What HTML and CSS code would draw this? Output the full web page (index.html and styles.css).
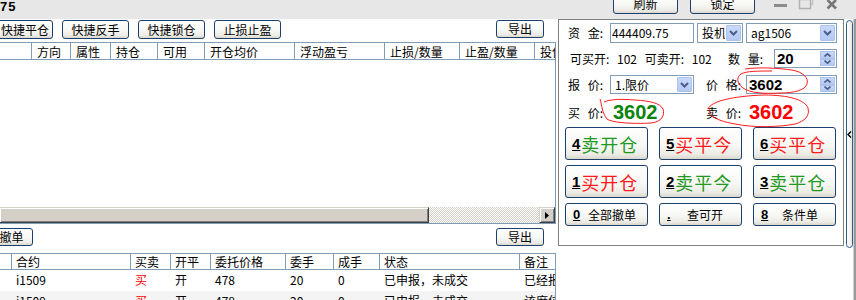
FILE: index.html
```html
<!DOCTYPE html>
<html lang="zh-CN">
<head>
<meta charset="utf-8">
<title>交易下单</title>
<link rel="stylesheet" href="styles.css">
</head>
<body>
<div class="app">
  <header class="topbar">
    <span class="title">75</span>
    <div class="topbtns">
      <span class="btn tbtn">刷新</span>
      <span class="btn tbtn">锁定</span>
    </div>
    <svg class="winctl" width="64" height="14" viewBox="0 0 64 14">
      <rect x="0" y="4" width="13" height="3" fill="#8c8c8c"/>
      <rect x="28.5" y="-3.5" width="10" height="8" fill="none" stroke="#c4c4c4" stroke-width="1.5"/>
      <rect x="25.5" y="-0.5" width="11" height="9" fill="#e7e7e7" stroke="#b0b0b0" stroke-width="1.5"/>
      <path d="M53.5 0 L62 8.5 M62 0 L53.5 8.5" stroke="#767676" stroke-width="2.6"/>
    </svg>
  </header>

  <div class="main">
    <section class="left">
      <div class="toolbar tb1">
        <span class="btn qb first">快捷平仓</span>
        <span class="btn qb">快捷反手</span>
        <span class="btn qb">快捷锁仓</span>
        <span class="btn qb">止损止盈</span>
        <span class="btn exp">导出</span>
      </div>

      <div class="grid g1">
        <div class="ghead cols1">
          <span></span><span>方向</span><span>属性</span><span>持仓</span><span>可用</span><span>开仓均价</span><span>浮动盈亏</span><span>止损/数量</span><span>止盈/数量</span><span>投保</span>
        </div>
        <div class="gbody"></div>
        <div class="hscroll">
          <span class="thumb"></span>
          <span class="track"></span>
          <span class="arrow"><svg width="4" height="7" viewBox="0 0 4 7"><path d="M0 0 L4 3.5 L0 7 Z" fill="#000"/></svg></span>
        </div>
      </div>

      <div class="toolbar tb2">
        <span class="btn qb cancel">全部撤单</span>
        <span class="btn exp">导出</span>
      </div>

      <div class="grid g2">
        <div class="ghead cols2">
          <span></span><span>合约</span><span>买卖</span><span>开平</span><span>委托价格</span><span>委手</span><span>成手</span><span>状态</span><span>备注</span>
        </div>
        <div class="grow cols2">
          <span></span><span>i1509</span><span class="red">买</span><span>开</span><span>478</span><span>20</span><span>0</span><span>已申报，未成交</span><span>已经报入</span>
        </div>
        <div class="grow alt cols2">
          <span></span><span>i1509</span><span class="red">买</span><span>开</span><span>478</span><span>20</span><span>0</span><span>已申报，未成交</span><span>该席位</span>
        </div>
      </div>
    </section>

    <section class="right">
      <div class="frame">
        <div class="frow r1">
          <span class="lbl">资 金:</span>
          <span class="inp w84">444409.75</span>
          <span class="combo w46 ml3"><span class="cv">投机</span><span class="dd"><svg width="9" height="6" viewBox="0 0 9 6"><path d="M1 1 L4.5 4.5 L8 1" fill="none" stroke="#4a5f88" stroke-width="2"/></svg></span></span>
          <span class="combo w91 ml3"><span class="cv">ag1506</span><span class="dd"><svg width="9" height="6" viewBox="0 0 9 6"><path d="M1 1 L4.5 4.5 L8 1" fill="none" stroke="#4a5f88" stroke-width="2"/></svg></span></span>
        </div>
        <div class="frow r2">
          <span class="avail">可买开: 102 可卖开: 102</span>
          <span class="lbl lq">数 量:</span>
          <span class="spin w63"><span class="sv">20</span><span class="sb"><span class="sh"><svg width="7" height="4" viewBox="0 0 7 4"><path d="M0.5 3.5 L3.5 0.8 L6.5 3.5" fill="none" stroke="#4a5f88" stroke-width="1.6"/></svg></span><span class="sh"><svg width="7" height="4" viewBox="0 0 7 4"><path d="M0.5 0.5 L3.5 3.2 L6.5 0.5" fill="none" stroke="#4a5f88" stroke-width="1.6"/></svg></span></span></span>
        </div>
        <div class="frow r3">
          <span class="lbl">报 价:</span>
          <span class="combo w84"><span class="cv">1.限价</span><span class="dd"><svg width="9" height="6" viewBox="0 0 9 6"><path d="M1 1 L4.5 4.5 L8 1" fill="none" stroke="#4a5f88" stroke-width="2"/></svg></span></span>
          <span class="lbl lp">价 格:</span>
          <span class="spin w91"><span class="sv">3602</span><span class="sb"><span class="sh"><svg width="7" height="4" viewBox="0 0 7 4"><path d="M0.5 3.5 L3.5 0.8 L6.5 3.5" fill="none" stroke="#4a5f88" stroke-width="1.6"/></svg></span><span class="sh"><svg width="7" height="4" viewBox="0 0 7 4"><path d="M0.5 0.5 L3.5 3.2 L6.5 0.5" fill="none" stroke="#4a5f88" stroke-width="1.6"/></svg></span></span></span>
        </div>
        <div class="frow r4">
          <span class="lbl">买 价:</span>
          <span class="price buy">3602</span>
          <span class="lbl ls">卖 价:</span>
          <span class="price sell">3602</span>
        </div>
        <div class="opgrid">
          <button class="btn op"><u>4</u><span class="g">卖开仓</span></button>
          <button class="btn op"><u>5</u><span class="r">买平今</span></button>
          <button class="btn op"><u>6</u><span class="r">买平仓</span></button>
          <button class="btn op"><u>1</u><span class="r">买开仓</span></button>
          <button class="btn op"><u>2</u><span class="g">卖平今</span></button>
          <button class="btn op"><u>3</u><span class="g">卖平仓</span></button>
          <button class="btn op sm"><u class="k k0">0</u>全部撤单</button>
          <button class="btn op sm"><u class="k kd">.</u>查可开</button>
          <button class="btn op sm"><u class="k k8">8</u>条件单</button>
        </div>
      </div>
      <div class="vsplit"><svg width="5" height="7" viewBox="0 0 5 7"><path d="M4 0.5 L1 3.5 L4 6.5" fill="none" stroke="#000" stroke-width="1.4"/></svg></div>
      <div class="edge"></div>
    </section>
  </div>

  <svg class="marks" width="856" height="300" viewBox="0 0 856 300">
    <path d="M745 69 C760 67 778 68 792 70 C803 72 809 78 807 84 C805 90 795 93 780 93 C764 94 750 93 743 88 C737 84 736 77 741 74 C746 71 758 71 772 71" fill="none" stroke="#ff1a1a" stroke-width="1"/>
    <path d="M600 99 C602 105 602 113 607 119 C613 123 634 124 651 123 C662 122 665 115 663 109 C660 103 650 101 635 100 C622 99 611 99 604 102" fill="none" stroke="#ff1a1a" stroke-width="1"/>
    <path d="M708 109 C711 101 734 96 764 95 C789 95 805 100 808 108 C810 116 805 121 795 124 C780 127 755 128 735 124 C718 121 707 116 710 108" fill="none" stroke="#ff1a1a" stroke-width="1"/>
  </svg>
</div>
</body>
</html>
```

FILE: styles.css
```css
* { box-sizing: border-box; margin: 0; padding: 0; }

html, body {
  width: 856px;
  height: 300px;
  overflow: hidden;
  background: #fff;
}

body {
  font-family: "Noto Sans CJK SC", "Liberation Sans", sans-serif;
  font-size: 12px;
  line-height: 16px;
  color: #000;
}

.app {
  position: relative;
  width: 856px;
  height: 300px;
  overflow: hidden;
}

/* ---------- top bar ---------- */
.topbar {
  height: 19px;
  background: #e7e7e7;
  display: flex;
  align-items: flex-start;
}

.title {
  font-family: "Liberation Sans", sans-serif;
  font-weight: bold;
  font-size: 13px;
  line-height: 13px;
  letter-spacing: 1px;
}

.topbtns {
  display: flex;
  gap: 12px;
  margin-left: auto;
  margin-top: -6px;
}

.winctl {
  flex: none;
  margin-left: 19px;
  margin-right: 18px;
}

/* ---------- XP buttons ---------- */
.btn {
  display: flex;
  align-items: center;
  justify-content: center;
  flex: none;
  border: 1px solid #1d3f6e;
  border-radius: 3px;
  background: linear-gradient(180deg, #ffffff 0%, #f7f7f4 55%, #ecebe5 85%, #d9d6cc 100%);
  font-family: "Noto Sans CJK SC", "Liberation Sans", sans-serif;
  font-size: 12px;
  line-height: 16px;
  color: #000;
  white-space: nowrap;
  overflow: hidden;
}

.tbtn { width: 65px; height: 20px; }

/* ---------- left side ---------- */
.main {
  display: flex;
  height: 281px;
}

.left {
  width: 556px;
  flex: none;
  display: flex;
  flex-direction: column;
}

.toolbar {
  display: flex;
  align-items: flex-start;
  flex: none;
}

.tb1 { height: 23px; padding-top: 1px; gap: 9px; }
.tb2 { height: 29px; padding-top: 4px; }

.qb { width: 67px; height: 19px; }
.first { margin-left: -14px; justify-content: flex-end; padding-right: 3px; }
.tb2 .qb { height: 18px; }
.cancel { margin-left: -34px; }

.exp {
  width: 48px;
  height: 18px;
  margin-left: auto;
  margin-right: 12px;
}

.grid {
  border-top: 1px solid #7f9db9;
  border-right: 1px solid #7f9db9;
  display: flex;
  flex-direction: column;
  overflow: hidden;
}

.g1 {
  height: 182px;
  border-bottom: 1px solid #7f9db9;
  flex: none;
}

.g2 { flex: 1; }

.cols1 { display: grid; grid-template-columns: 31px 39px 40px 47px 47px 90px 90px 75px 75px 1fr; }
.cols2 { display: grid; grid-template-columns: 11px 119px 40px 40px 75px 48px 46px 140px 1fr; }

.ghead {
  border-bottom: 1px solid #7f9db9;
  flex: none;
}

.g1 .ghead { height: 17px; }
.g2 .ghead { height: 16px; }

.ghead span {
  border-left: 1px solid #7f9db9;
  padding-left: 4px;
  line-height: 15px;
  white-space: nowrap;
  overflow: hidden;
}

.g1 .ghead span { padding-left: 5px; line-height: 17px; }
.ghead span:first-child { border-left: none; }

.gbody { flex: 1; }

.hscroll {
  height: 16px;
  display: flex;
  flex: none;
}

.thumb, .arrow {
  background: #d4d0c8;
  box-shadow: inset 1px 1px #ffffff, inset -1px -1px #808080;
  border-right: 1px solid #404040;
  border-bottom: 1px solid #404040;
  border-top: 1px solid #d4d0c8;
}

.thumb { width: 429px; flex: none; }

.track {
  flex: 1;
  background-color: #fff;
  background-image: repeating-conic-gradient(#d4d0c8 0 25%, #ffffff 0 50%);
  background-size: 2px 2px;
}

.arrow {
  width: 16px;
  flex: none;
  display: flex;
  align-items: center;
  justify-content: center;
  border-left: 1px solid #d4d0c8;
}

.grow {
  height: 21px;
  flex: none;
}

.grow span {
  border-left: 1px solid transparent;
  padding-left: 4px;
  line-height: 20px;
  white-space: nowrap;
  overflow: hidden;
}

.grow.alt { background: #f4f4f4; }
.red { color: #ff0000; }

/* ---------- right side ---------- */
.right {
  width: 300px;
  flex: none;
  display: flex;
  align-items: flex-start;
}

.frame {
  margin-left: 2px;
  width: 286px;
  height: 227px;
  flex: none;
  border: 1px solid #808080;
  padding-top: 3px;
}

.frow {
  display: flex;
  align-items: center;
  padding-left: 9px;
}

.r1 { height: 20px; }
.r2 { height: 19px; margin-top: 6px; }
.r3 { height: 19px; margin-top: 7px; }
.r4 { height: 21px; margin-top: 8px; }

.lbl {
  width: 42px;
  flex: none;
  word-spacing: 5px;
  white-space: nowrap;
}

.lq { width: 46px; }
.lp { width: 40px; margin-left: 12px; }
.ls { width: 43px; }

.avail {
  width: 160px;
  flex: none;
  padding-left: 2px;
  word-spacing: 5px;
  white-space: nowrap;
}

.inp, .combo, .spin {
  height: 100%;
  flex: none;
  border: 1px solid #7f9db9;
  background: #fff;
  display: flex;
  align-items: stretch;
  white-space: nowrap;
}

.inp { padding-left: 1px; line-height: 18px; }

.w84 { width: 84px; }
.w46 { width: 46px; }
.w91 { width: 91px; }
.w63 { width: 63px; }
.ml3 { margin-left: 3px; }

.cv {
  flex: 1;
  padding-left: 4px;
  line-height: 17px;
  overflow: hidden;
}

.dd {
  width: 15px;
  margin: 1px;
  flex: none;
  background: linear-gradient(180deg, #c9d9fb, #b4c9f2);
  border: 1px solid #aec3ec;
  border-radius: 1px;
  display: flex;
  align-items: center;
  justify-content: center;
}

.sv {
  flex: 1;
  padding-left: 2px;
  font-family: "Liberation Sans", sans-serif;
  font-weight: bold;
  font-size: 15px;
  line-height: 17px;
}

.sb {
  width: 15px;
  margin: 1px;
  flex: none;
  display: flex;
  flex-direction: column;
}

.sh {
  flex: 1;
  background: linear-gradient(180deg, #c9d9fb, #b4c9f2);
  border: 1px solid #aec3ec;
  display: flex;
  align-items: center;
  justify-content: center;
}

.price {
  font-family: "Liberation Sans", sans-serif;
  font-weight: bold;
  font-size: 20px;
  line-height: 21px;
  flex: none;
}

.buy { color: #0a840a; width: 93px; margin-left: 3px; }
.sell { color: #ff0000; }

.opgrid {
  margin-top: 4px;
  margin-left: 6px;
  display: grid;
  grid-template-columns: repeat(3, 83px);
  grid-template-rows: 33px 33px 23px;
  column-gap: 11px;
  row-gap: 5px;
}

.op {
  justify-content: flex-start;
  text-align: left;
  padding-left: 6px;
  width: 83px;
  cursor: default;
}

.op u {
  font-family: "Liberation Sans", sans-serif;
  font-weight: bold;
  font-size: 15px;
  line-height: 18px;
  margin-right: 1px;
}

.op .g, .op .r {
  font-size: 18px;
  line-height: 22px;
  letter-spacing: 1px;
}

.op .g { color: #1f9a1f; }
.op .r { color: #ff1a1a; }

.op.sm { padding-left: 7px; font-size: 12px; }

.op.sm u.k {
  font-size: 13px;
  display: inline-block;
  text-align: left;
  margin-right: 0;
}

.k0 { width: 15px; }
.kd { width: 20px; }
.k8 { width: 21px; }

.vsplit {
  width: 7px;
  height: 228px;
  margin-left: 2px;
  margin-top: 1px;
  flex: none;
  border: 1px solid #2b5c8c;
  border-radius: 4px;
  background: linear-gradient(90deg, #ffffff, #e9e7e0);
  display: flex;
  align-items: center;
  justify-content: center;
}

.edge {
  width: 3px;
  height: 281px;
  flex: none;
  background: #9a9a9a;
  border-left: 1px solid #d0d0d0;
}

/* annotation marks drawn over the panel */
.marks {
  position: absolute;
  left: 0;
  top: 0;
  pointer-events: none;
}
```
